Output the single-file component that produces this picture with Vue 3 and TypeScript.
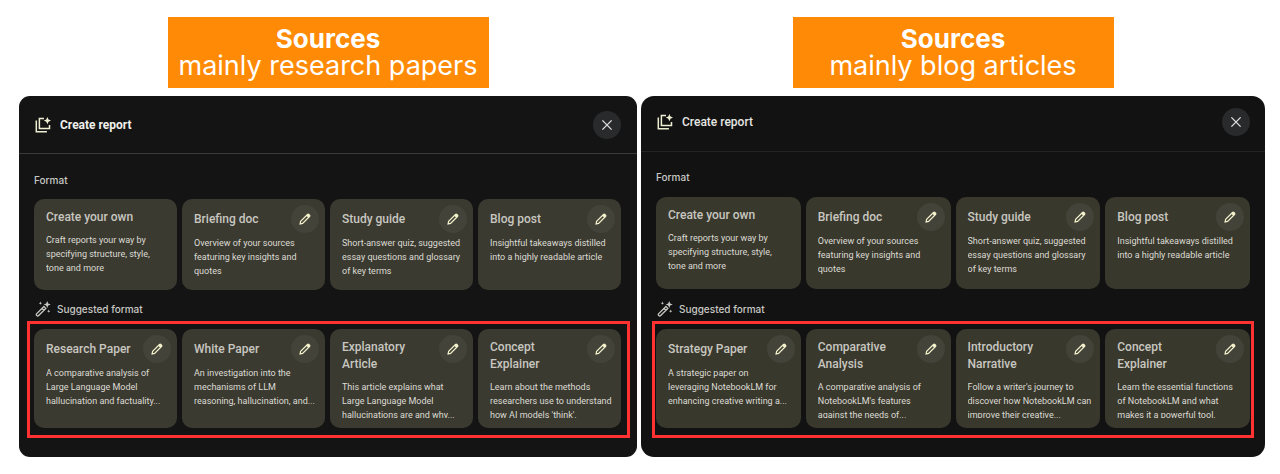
<script setup lang="ts">
interface FormatCard {
  title: string
  text: string
  editable: boolean
}

interface Report {
  id: string
  topic: string
  formats: FormatCard[]
  suggested: FormatCard[]
}

const card = (title: string, text: string, editable = true): FormatCard => ({ title, text, editable })

const formats: FormatCard[] = [
  card('Create your own', 'Craft reports your way by\nspecifying structure, style,\ntone and more', false),
  card('Briefing doc', 'Overview of your sources\nfeaturing key insights and\nquotes'),
  card('Study guide', 'Short-answer quiz, suggested\nessay questions and glossary\nof key terms'),
  card('Blog post', 'Insightful takeaways distilled\ninto a highly readable article'),
]

const reports: Report[] = [
  {
    id: 'research',
    topic: 'mainly research papers',
    formats,
    suggested: [
      card('Research Paper', 'A comparative analysis of\nLarge Language Model\nhallucination and factuality...'),
      card('White Paper', 'An investigation into the\nmechanisms of LLM\nreasoning, hallucination, and...'),
      card('Explanatory\nArticle', 'This article explains what\nLarge Language Model\nhallucinations are and why...'),
      card('Concept\nExplainer', "Learn about the methods\nresearchers use to understand\nhow AI models 'think'."),
    ],
  },
  {
    id: 'blog',
    topic: 'mainly blog articles',
    formats,
    suggested: [
      card('Strategy Paper', 'A strategic paper on\nleveraging NotebookLM for\nenhancing creative writing a...'),
      card('Comparative\nAnalysis', "A comparative analysis of\nNotebookLM's features\nagainst the needs of..."),
      card('Introductory\nNarrative', "Follow a writer's journey to\ndiscover how NotebookLM can\nimprove their creative..."),
      card('Concept\nExplainer', 'Learn the essential functions\nof NotebookLM and what\nmakes it a powerful tool.'),
    ],
  },
]
</script>

<template>
  <main class="page">
    <section v-for="report in reports" :key="report.id" class="column" :class="report.id">
      <h1 class="banner">
        <strong>Sources</strong>
        <span>{{ report.topic }}</span>
      </h1>

      <div class="panel">
        <header class="panel-head">
          <svg class="icon-report" viewBox="0 0 16 16" aria-hidden="true">
            <path d="M1.3 3.6v11.1h10.6" />
            <path d="M9 1.5H4.4v10.1h10.1V8" />
            <path class="solid" d="M12.4 0l1.1 2.5 2.5 1.1-2.5 1.1-1.1 2.5-1.1-2.5-2.5-1.1 2.5-1.1z" />
          </svg>
          <h2>Create report</h2>
          <button class="round close" type="button" aria-label="Close">
            <svg viewBox="0 0 12 12" aria-hidden="true"><path d="M1.4 1.4l9.2 9.2M10.6 1.4l-9.2 9.2" /></svg>
          </button>
        </header>

        <div class="panel-body">
          <h3 class="label">Format</h3>
          <div class="cards">
            <article v-for="item in report.formats" :key="item.title" class="card">
              <div class="card-head">
                <h4>{{ item.title }}</h4>
                <button v-if="item.editable" class="round edit" type="button" :aria-label="`Edit ${item.title}`">
                  <svg viewBox="0 0 12 12" aria-hidden="true">
                    <path d="M1.1 10.9l.5-2.5 6.9-6.9a1 1 0 0 1 1.4 0l.6.6a1 1 0 0 1 0 1.4l-6.9 6.9z" />
                    <path class="solid" d="M7.3 2.7l1.2-1.3a1 1 0 0 1 1.4 0l.7.7a1 1 0 0 1 0 1.4L9.3 4.7z" />
                  </svg>
                </button>
              </div>
              <p>{{ item.text }}</p>
            </article>
          </div>

          <h3 class="label suggested-label">
            <svg class="icon-wand" viewBox="0 0 16 16" aria-hidden="true">
              <path d="M1.5 12.9l7.4-7.4 1.9 1.9-7.4 7.4a.9.9 0 0 1-1.3 0l-.6-.6a.9.9 0 0 1 0-1.3zM7 7.4l1.9 1.9" />
              <path class="solid" d="M12.2 0l1 2.5 2.5 1-2.5 1-1 2.5-1-2.5-2.5-1 2.5-1zM5.4.6l.5 1.1 1.1.5-1.1.5-.5 1.1-.5-1.1-1.1-.5 1.1-.5zM13.7 8.6l.5 1.1 1.1.5-1.1.5-.5 1.1-.5-1.1-1.1-.5 1.1-.5z" />
            </svg>
            Suggested format
          </h3>
          <div class="cards highlight">
            <article v-for="item in report.suggested" :key="item.title" class="card">
              <div class="card-head">
                <h4>{{ item.title }}</h4>
                <button class="round edit" type="button" :aria-label="`Edit ${item.title}`">
                  <svg viewBox="0 0 12 12" aria-hidden="true">
                    <path d="M1.1 10.9l.5-2.5 6.9-6.9a1 1 0 0 1 1.4 0l.6.6a1 1 0 0 1 0 1.4l-6.9 6.9z" />
                    <path class="solid" d="M7.3 2.7l1.2-1.3a1 1 0 0 1 1.4 0l.7.7a1 1 0 0 1 0 1.4L9.3 4.7z" />
                  </svg>
                </button>
              </div>
              <p>{{ item.text }}</p>
            </article>
          </div>
        </div>
      </div>
    </section>
  </main>
</template>

<style>
body {
  background: #fff;
}
</style>

<style scoped>
.page {
  display: flex;
  gap: 4px;
  padding: 17px 15px 17px 19px;
  font-family: Roboto, "Liberation Sans", sans-serif;
}

h1,
h2,
h3,
h4,
p {
  margin: 0;
}

svg {
  display: block;
  flex: none;
  fill: none;
  stroke: currentColor;
}

.solid {
  fill: currentColor;
  stroke: none;
}

.column {
  display: flex;
  flex: 618 1 0;
  flex-direction: column;
  align-items: center;
  gap: 8px;
  min-width: 0;
}

.blog {
  flex-grow: 624;
}

.banner {
  display: flex;
  flex-direction: column;
  align-items: center;
  box-sizing: border-box;
  min-width: 321px;
  padding: 8px 8px 9px;
  background: #ff8a05;
  color: #fff;
  font-family: Inter, "Liberation Sans", sans-serif;
  font-size: 27px;
  font-weight: 400;
  line-height: 27px;
  white-space: nowrap;
}

.banner strong {
  font-size: 26px;
  font-weight: 700;
}

.panel {
  align-self: stretch;
  padding-bottom: 19px;
  border-radius: 11px;
  background: #141414;
  color: #c9c9c4;
}

.blog .panel {
  border-radius: 13px;
  background: #121212;
}

.panel-head {
  display: flex;
  align-items: center;
  gap: 9px;
  box-sizing: border-box;
  height: 58px;
  padding: 0 16px;
  border-bottom: 1px solid #3b3b3b;
}

.blog .panel-head {
  height: 56px;
  padding: 0 15px 3px 16px;
  border-bottom-color: #232424;
}

.panel-head h2 {
  flex: 1;
  color: #f0f0ec;
  font-size: 12px;
  font-weight: 700;
  line-height: 16px;
}

.blog .panel-head h2 {
  color: #e6e6e2;
  font-weight: 500;
}

.icon-report {
  width: 16px;
  height: 16px;
  color: #eeeed2;
  stroke-width: 1.5;
}

.round {
  display: flex;
  flex: none;
  align-items: center;
  justify-content: center;
  width: 28px;
  height: 28px;
  padding: 0;
  border: 0;
  border-radius: 50%;
}

.close {
  background: #282a2b;
  color: #e0e2e2;
}

.close svg {
  width: 12px;
  height: 12px;
  stroke-width: 1.3;
}

.panel-body {
  padding: 18px 16px 0 15px;
}

.blog .panel-body {
  padding: 17px 15px 0;
}

.label {
  display: flex;
  align-items: center;
  gap: 6px;
  margin-bottom: 11px;
  font-family: Inter, "Liberation Sans", sans-serif;
  font-size: 10px;
  font-weight: 500;
  line-height: 16px;
}

.blog .label {
  margin-bottom: 12px;
}

.panel-body .suggested-label {
  margin: 11px 0 4px;
  padding-left: 1px;
}

.blog .panel-body .suggested-label {
  margin-top: 12px;
}

.icon-wand {
  width: 16px;
  height: 16px;
  stroke-width: 1.3;
}

.cards {
  display: grid;
  grid-template-columns: repeat(4, minmax(0, 1fr));
  gap: 5px;
}

.highlight {
  margin: 0 -9px 0 -7px;
  padding: 5px 6px 7px 4px;
  border: 3px solid #ff3131;
}

.blog .highlight {
  margin: 0 -4px;
  padding: 5px 1px 7px;
}

.card {
  display: flex;
  flex-direction: column;
  box-sizing: border-box;
  height: 91px;
  padding: 6px 6px 10px 12px;
  border-radius: 10px;
  background: #3b3a31;
}

.blog .card {
  height: 92px;
  background: #39382d;
}

.highlight .card,
.blog .highlight .card {
  height: 99px;
}

.card-head {
  display: flex;
  flex: none;
  align-items: flex-start;
  justify-content: space-between;
}

.card h4 {
  align-self: center;
  padding: 4px 0;
  color: #c8c7c0;
  font-size: 12px;
  font-weight: 500;
  line-height: 17px;
  white-space: pre;
}

.card p {
  min-height: 0;
  margin-top: 3px;
  overflow: hidden;
  color: #dddcd4;
  font-size: 9px;
  line-height: 14px;
  white-space: pre;
}

.edit {
  background: #444339;
  color: #f3f2cd;
}

.edit svg {
  width: 12px;
  height: 12px;
  stroke-width: 1.2;
}
</style>
